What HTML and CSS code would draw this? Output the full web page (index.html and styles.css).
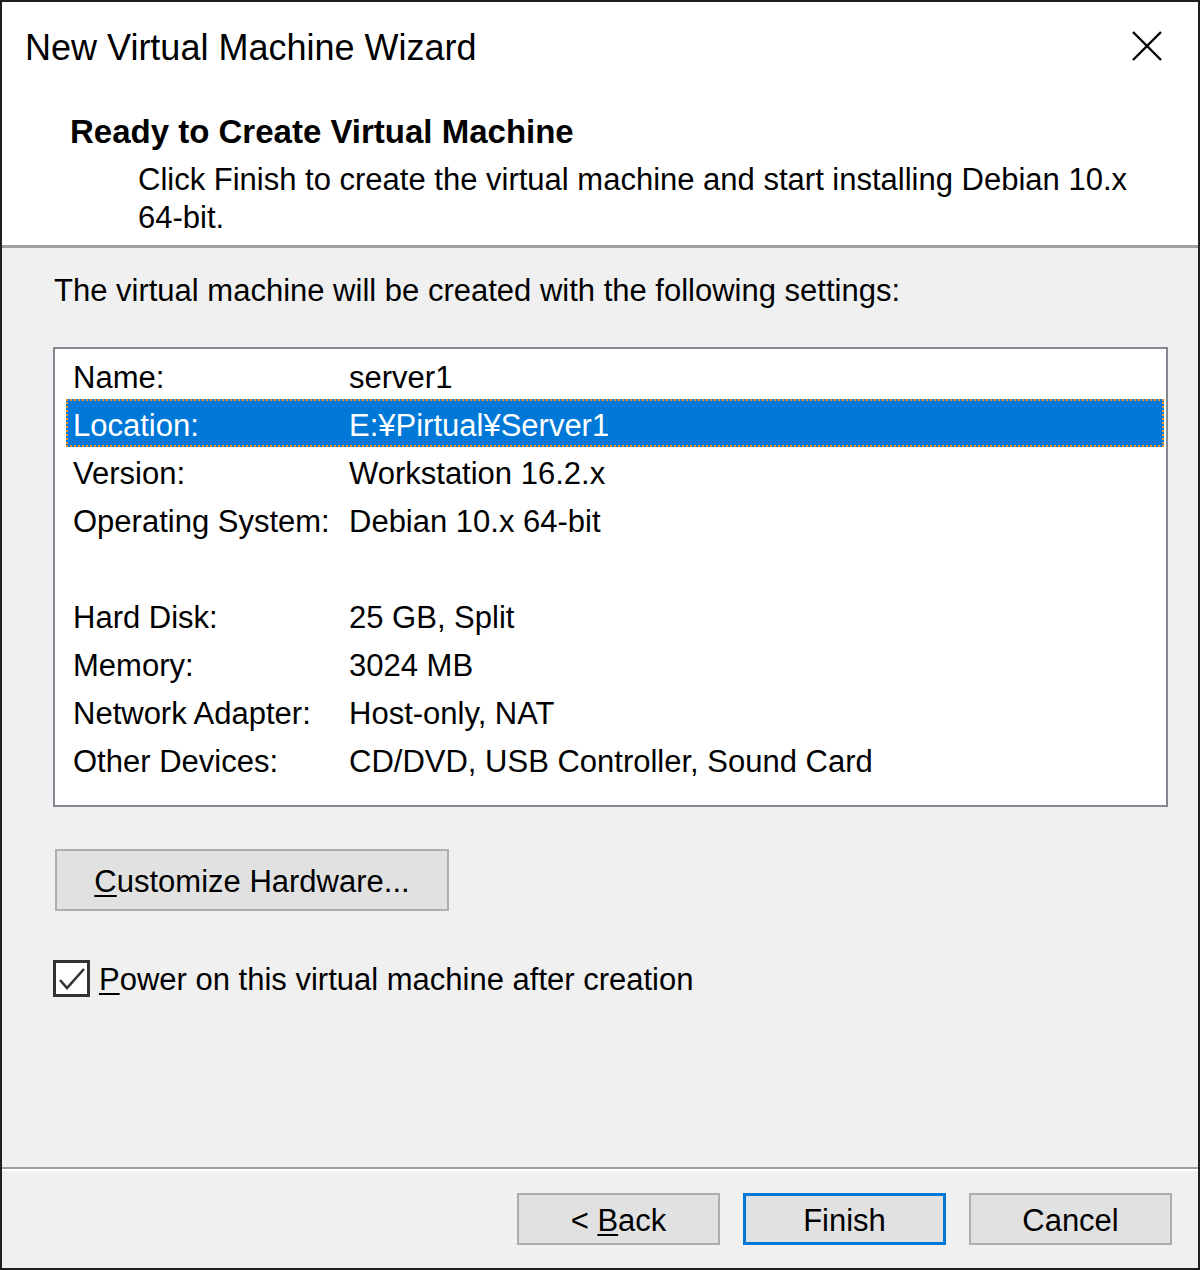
FILE: index.html
```html
<!DOCTYPE html>
<html>
<head>
<meta charset="utf-8">
<title>New Virtual Machine Wizard</title>
<link rel="stylesheet" href="styles.css">
</head>
<body>
<div class="window">
  <div class="header">
    <div class="titlebar">
      <div class="title">New Virtual Machine Wizard</div>
      <svg class="close" width="30" height="30" viewBox="0 0 30 30"><path d="M1 1 L29 29 M29 1 L1 29" stroke="#000" stroke-width="2.4" fill="none"/></svg>
    </div>
    <div class="heading">Ready to Create Virtual Machine</div>
    <div class="desc">Click Finish to create the virtual machine and start installing Debian 10.x<br>64-bit.</div>
  </div>
  <div class="sep sep-top"></div>
  <div class="body">
    <div class="intro">The virtual machine will be created with the following settings:</div>
    <div class="list">
      <div class="row"><span class="label">Name:</span><span class="value">server1</span></div>
      <div class="row selected"><span class="label">Location:</span><span class="value">E:¥Pirtual¥Server1</span></div>
      <div class="row"><span class="label">Version:</span><span class="value">Workstation 16.2.x</span></div>
      <div class="row"><span class="label">Operating System:</span><span class="value">Debian 10.x 64-bit</span></div>
      <div class="row"><span class="label"></span><span class="value"></span></div>
      <div class="row"><span class="label">Hard Disk:</span><span class="value">25 GB, Split</span></div>
      <div class="row"><span class="label">Memory:</span><span class="value">3024 MB</span></div>
      <div class="row"><span class="label">Network Adapter:</span><span class="value">Host-only, NAT</span></div>
      <div class="row"><span class="label">Other Devices:</span><span class="value">CD/DVD, USB Controller, Sound Card</span></div>
    </div>
    <div class="btn btn-custom"><span><u>C</u>ustomize Hardware...</span></div>
    <div class="check-row">
      <div class="checkbox"><svg width="30" height="30" viewBox="0 0 30 30"><path d="M3 16 L10 24 L27 5" stroke="#333" stroke-width="2.6" fill="none"/></svg></div>
      <div class="check-label"><u>P</u>ower on this virtual machine after creation</div>
    </div>
  </div>
  <div class="sep sep-bottom"></div>
  <div class="footer">
    <div class="btn btn-foot"><span>&lt; <u>B</u>ack</span></div>
    <div class="btn btn-foot btn-default"><span>Finish</span></div>
    <div class="btn btn-foot"><span>Cancel</span></div>
  </div>
</div>
</body>
</html>
```
FILE: styles.css
```css
html, body {
  margin: 0;
  padding: 0;
  background: #1e1e1e;
}
.window {
  width: 1200px;
  height: 1270px;
  box-sizing: border-box;
  border: 2px solid #1e1e1e;
  display: flex;
  flex-direction: column;
  font-family: "Liberation Sans", Arial, sans-serif;
  color: #000;
  overflow: hidden;
}
.header {
  background: #fff;
  height: 243px;
  box-sizing: border-box;
  padding-top: 24px;
}
.titlebar {
  display: flex;
  align-items: center;
  justify-content: space-between;
  height: 44px;
  padding-left: 23px;
  padding-right: 36px;
}
.title {
  font-size: 36px;
  line-height: 44px;
}
.close {
  display: block;
  margin-top: -4px;
}
.heading {
  margin-top: 42px;
  padding-left: 68px;
  font-size: 33px;
  font-weight: bold;
  line-height: 40px;
}
.desc {
  margin-top: 9px;
  padding-left: 136px;
  font-size: 31px;
  line-height: 38px;
  white-space: nowrap;
}
.sep {
  flex: none;
}
.sep-top {
  height: 3px;
  background: #a0a0a0;
}
.sep-bottom {
  height: 2px;
  background: #a0a0a0;
  border-bottom: 2px solid #fff;
}
.body {
  flex: 1;
  background: #f0f0f0;
  padding: 24px 0 0 51px;
  font-size: 31px;
}
.intro {
  line-height: 38px;
  padding-left: 1px;
  white-space: nowrap;
}
.list {
  margin-top: 37px;
  width: 1115px;
  height: 460px;
  box-sizing: border-box;
  border: 2px solid #828790;
  background: #fff;
  padding: 2px 2px 2px 11px;
}
.row {
  display: flex;
  height: 48px;
  box-sizing: border-box;
  padding-top: 5px;
  line-height: 43px;
  padding-left: 7px;
  white-space: nowrap;
}
.row .label {
  width: 276px;
  flex: none;
}
.row.selected {
  background: #0078d7;
  color: #fff;
  outline: 2px dotted #f7922a;
  outline-offset: -2px;
}
.btn {
  box-sizing: border-box;
  background: #e1e1e1;
  border: 2px solid #adadad;
  display: flex;
  align-items: center;
  justify-content: center;
  font-size: 31px;
  white-space: nowrap;
  padding-top: 4px;
}
.btn-custom {
  margin-top: 42px;
  margin-left: 2px;
  width: 394px;
  height: 62px;
}
.check-row {
  margin-top: 47px;
  display: flex;
  align-items: center;
}
.checkbox {
  width: 37px;
  height: 37px;
  box-sizing: border-box;
  border: 3px solid #333;
  background: #fff;
  display: flex;
  align-items: center;
  justify-content: center;
  flex: none;
}
.checkbox svg {
  display: block;
}
.check-label {
  margin-left: 9px;
  line-height: 38px;
  padding-top: 3px;
  white-space: nowrap;
}
.footer {
  height: 97px;
  box-sizing: border-box;
  background: #f0f0f0;
  display: flex;
  justify-content: flex-end;
  gap: 23px;
  padding: 22px 26px 0 0;
}
.btn-foot {
  width: 203px;
  height: 52px;
}
.btn-default {
  border: 3px solid #0078d7;
}
u {
  text-decoration-thickness: 2px;
  text-underline-offset: 3px;
}
```
